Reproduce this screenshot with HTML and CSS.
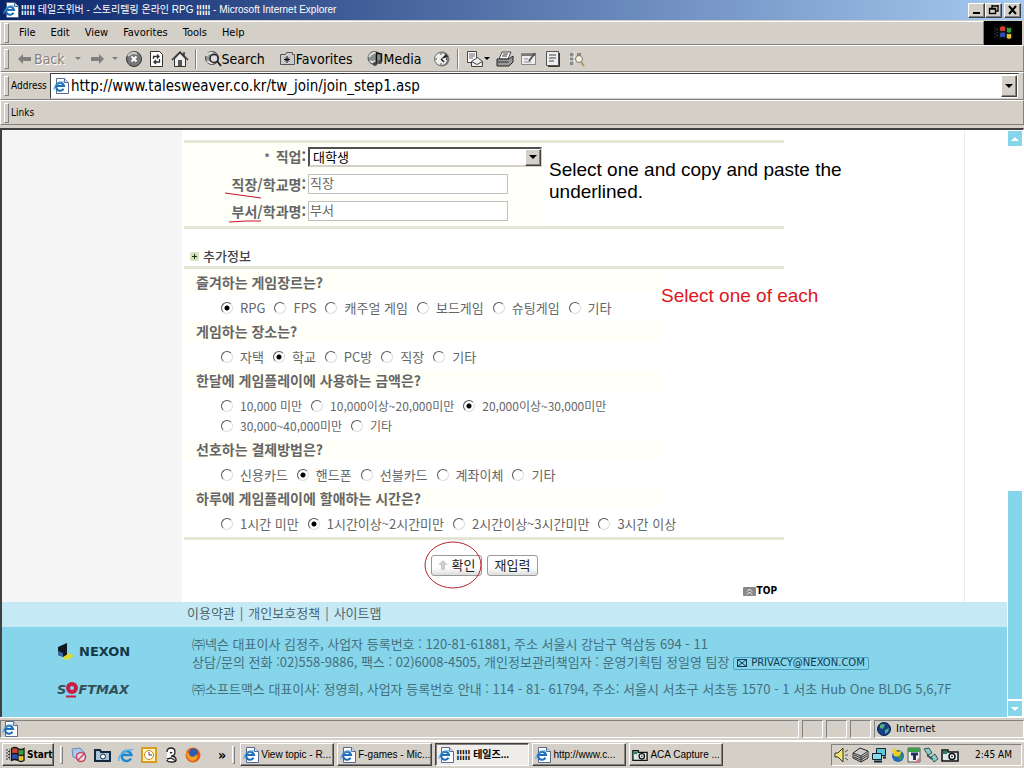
FILE: index.html
```
<!DOCTYPE html>
<html lang="ko">
<head>
  <meta charset="utf-8">
  <title>테일즈위버 - 스토리텔링 온라인 RPG</title>
  <meta name="viewport" content="width=device-width, initial-scale=1.0">
  <link rel="stylesheet" href="styles.css">
</head>
<body>
  <svg class="sprite" width="0" height="0">
    <symbol id="ie" viewBox="0 0 16 16">
      <path d="M3.5.5h8l4 4v11h-12z" fill="#fff" stroke="#5a6a8c"/>
      <path d="M11.5.5v4h4" fill="#cfdcf0" stroke="#5a6a8c"/>
      <path d="M10.5 10.8A4 4 0 1 1 11 8H3.5" fill="none" stroke="#1f6fb8" stroke-width="2.2"/>
      <path d="M1 12C0 8 6 3 12 4" fill="none" stroke="#4ba0dc"/>
    </symbol>
    <symbol id="camera" viewBox="0 0 18 16">
      <path d="M1 3h6v2h10v9H1z" fill="#dfe8e8" stroke="#111" stroke-width="1.5"/>
      <path d="M2 4h4v3H2z" fill="#2a7b6a"/>
      <circle cx="11" cy="9.5" r="3" fill="#fff" stroke="#111" stroke-width="1.5"/>
      <circle cx="11" cy="9.5" r="1" fill="#246"/>
    </symbol>
    <symbol id="flag" viewBox="0 0 20 18">
      <path d="M7 3q3-2 5.500 0v5q-3-2-5.500 0z" fill="#d8432c"/>
      <path d="M13.500 3q2.500 2 5 0v5q-2.500 2-5 0z" fill="#3c9a3c"/>
      <path d="M7 9q3-2 5.500 0v5q-3-2-5.500 0z" fill="#2b4fb8"/>
      <path d="M13.500 9q2.500 2 5 0v5q-2.500 2-5 0z" fill="#e8c52c"/>
      <path d="M6.500 2.500q3.500-2 6.500 0t6 0v12q-3 2-6 0t-6.500 0zM13 2v13M6.500 8.500q3.500-2 6.500 0t6 0" fill="none" stroke="#111" stroke-width="1.300"/>
      <path d="M1 4h4M1 7h4M1 10h4M1 13h4M3 5.500h2M3 8.500h2M3 11.500h2" stroke="#334" stroke-dasharray="2 1"/>
    </symbol>
  </svg>

  <header class="titlebar">
    <svg class="icon"><use href="#ie"/></svg>
    <h1><b>¦¦¦¦¦</b> 테일즈위버 - 스토리텔링 온라인 RPG <b>¦¦¦¦¦</b> - Microsoft Internet Explorer</h1>
    <div class="window-buttons">
      <button type="button" aria-label="Minimize"><svg width="12" height="10"><path d="M2 8h7" stroke="#000" stroke-width="2"/></svg></button>
      <button type="button" aria-label="Restore"><svg width="12" height="10"><path d="M4 1h6M4 0v3M10 0v6H8M1 4h6M1.500 3.500h6v5h-6z" fill="none" stroke="#000" stroke-width="1.300"/></svg></button>
      <button type="button" class="close" aria-label="Close"><svg width="12" height="10"><path d="M2 1l7 8M9 1L2 9" stroke="#000" stroke-width="2"/></svg></button>
    </div>
  </header>

  <div class="menu-row">
    <nav class="band menubar">
      <a href="#">File</a><a href="#">Edit</a><a href="#">View</a><a href="#">Favorites</a><a href="#">Tools</a><a href="#">Help</a>
    </nav>
    <div class="throbber">
      <svg width="20" height="18"><use href="#flag"/></svg>
    </div>
  </div>

  <div class="band toolbar">
    <button type="button" class="disabled back"><svg width="14" height="12"><path d="M0 6l5-5v3h8v4H5v3z" fill="#808080"/></svg>Back</button>
    <i class="caret dim"></i>
    <button type="button" class="forward" aria-label="Forward"><svg width="14" height="12"><path d="M14 6L9 1v3H1v4h8v3z" fill="#808080"/></svg></button>
    <i class="caret dim"></i>
    <button type="button" class="stop" aria-label="Stop"><svg width="18" height="18"><circle cx="9" cy="9" r="7.500" fill="#777" stroke="#333"/><path d="M3 6q4-5 9-2" fill="none" stroke="#ccc" stroke-width="2"/><path d="M6.500 6.500l5 5M11.500 6.500l-5 5" stroke="#fff" stroke-width="2"/></svg></button>
    <button type="button" aria-label="Refresh"><svg width="16" height="18"><path d="M1.500 1.500h9l3 3v12h-12z" fill="#fff" stroke="#333"/><path d="M4.500 9V6.500h5M8 4.500l2 2-2 2M10.500 9v3h-5M7 10l-2 2 2 2" fill="none" stroke="#333" stroke-width="1.300"/></svg></button>
    <button type="button" class="home" aria-label="Home"><svg width="18" height="18"><path d="M3.500 9v7.500h11V9L9 3z" fill="#eee" stroke="#333"/><path d="M1 10l8-8 8 8M13 2v4" fill="none" stroke="#333" stroke-width="1.500"/><path d="M7 10h4v6H7z" fill="#555"/></svg></button>
    <i class="divider"></i>
    <button type="button"><svg width="18" height="18"><circle cx="8" cy="8" r="6.500" fill="#999" stroke="#444"/><path d="M2 6q3-4 7-3M3 11q4 3 6 2" stroke="#ddd" stroke-width="2" fill="none"/><circle cx="10" cy="8.500" r="4" fill="#ddd" stroke="#222" stroke-width="1.500"/><path d="M13 11l4 5" stroke="#222" stroke-width="2"/></svg>Search</button>
    <button type="button" class="favorites"><svg width="17" height="16"><path d="M1.500 3.500h5l1-2h6v2h2v10h-14z" fill="#ccc" stroke="#555"/><path d="M8 5v7M5 8.500h6M6 6.500l4 4M10 6.500l-4 4" stroke="#111"/></svg>Favorites</button>
    <button type="button" class="media"><svg width="17" height="18"><circle cx="7.500" cy="8" r="6.500" fill="#889090" stroke="#555"/><path d="M2 7q3-5 8-4M3 11q3 2 5 0" stroke="#ddd" stroke-width="2" fill="none"/><path d="M9.500 14V3l5 1v8" fill="none" stroke="#111" stroke-width="1.500"/><circle cx="8" cy="14" r="2" fill="#444"/><circle cx="13" cy="12" r="2" fill="#444"/></svg>Media</button>
    <button type="button" class="history" aria-label="History"><svg width="18" height="18"><circle cx="9" cy="9" r="7.500" fill="#777"/><circle cx="8" cy="9" r="6.500" fill="#eee" stroke="#777"/><path d="M8 9l5-5 2 3z" fill="#222"/><path d="M8 9l3 3M8 3.500v1M8 13.500v1M2.500 9h1M13 9h1" stroke="#222" stroke-width="1.500"/></svg></button>
    <i class="divider"></i>
    <button type="button" aria-label="Mail"><svg width="18" height="18"><path d="M1.500 1.500h9v11h-9z" fill="#fff" stroke="#444"/><path d="M3 4h6M3 6h6M3 8h4" stroke="#666"/><path d="M5.500 11.500l6-4 5 4v5h-11z" fill="#eee" stroke="#444"/><path d="M5.500 11.500l5.500 3 5.500-3" fill="none" stroke="#444"/></svg><i class="caret small"></i></button>
    <button type="button" aria-label="Print"><svg width="18" height="18"><path d="M6 2h9l-3 7H3z" fill="#fff" stroke="#444"/><path d="M1 9h12l4-3v6l-4 4H1z" fill="#999" stroke="#222"/><path d="M1.500 12h11M7 4h5M6 6h5" stroke="#333"/></svg></button>
    <button type="button" aria-label="Edit"><svg width="18" height="18"><path d="M1.500 3.500h14v11h-14z" fill="#eee" stroke="#888"/><path d="M1.500 5h14" stroke="#777" stroke-width="2"/><path d="M4 9h4M4 12h7" stroke="#888"/><path d="M15 3l-6 8" stroke="#555" stroke-width="2"/></svg></button>
    <button type="button" aria-label="Discuss"><svg width="18" height="18"><path d="M2.500 1.500h12v14h-12z" fill="#eee" stroke="#555"/><path d="M15.500 3v13.500H4" stroke="#333" fill="none"/><path d="M5 5h7M5 8h7M5 11h5" stroke="#444"/></svg></button>
    <button type="button" aria-label="Research"><svg width="18" height="18"><path d="M2 3h4v12H2zM9 3h4v6H9z" fill="#888"/><path d="M1 7h14M1 11h10M6 2v13" stroke="#eee"/><circle cx="11" cy="9" r="3.500" fill="#f5f2dc" stroke="#777"/><path d="M13 12l3 4" stroke="#b0985a" stroke-width="2"/></svg></button>
  </div>

  <div class="band address">
    <label for="url">Address</label>
    <div class="address-box">
      <svg class="icon"><use href="#ie"/></svg>
      <input id="url" type="text" value="http://www.talesweaver.co.kr/tw_join/join_step1.asp">
      <button type="button" class="drop" aria-label="History list"><i class="caret"></i></button>
    </div>
  </div>

  <div class="band links">Links</div>

  <div class="viewport">
    <div class="page">
      <div class="columns">
        <div class="side"></div>
        <main>
          <form>
            <section class="job">
              <div class="field">
                <label for="job"><small>*</small> 직업:</label>
                <span class="select"><select id="job"><option>대학생</option></select><i class="select-arrow"><i class="caret"></i></i></span>
              </div>
              <div class="field">
                <label for="office">직장/학교명:
                  <svg class="mark" width="36" height="8"><path d="M0 2l36 5" stroke="#c8102e"/></svg>
                </label>
                <input id="office" type="text" value="직장">
              </div>
              <div class="field">
                <label for="dept">부서/학과명:
                  <svg class="mark flat" width="32" height="4"><path d="M0 3l18-1h14" stroke="#c8102e" fill="none"/></svg>
                </label>
                <input id="dept" type="text" value="부서">
              </div>
              <p class="note">Select one and copy and paste the underlined.</p>
            </section>

            <h2><svg width="9" height="9"><rect width="9" height="9" rx="2" fill="#cfe3bd"/><path d="M2 4.500h5M4.500 2v5" stroke="#243018"/></svg>추가정보</h2>

            <section class="survey">
              <fieldset>
                <legend>즐겨하는 게임장르는?</legend>
                <div class="options">
                  <label><input type="radio" name="genre" checked>RPG</label>
                  <label><input type="radio" name="genre">FPS</label>
                  <label><input type="radio" name="genre">캐주얼 게임</label>
                  <label><input type="radio" name="genre">보드게임</label>
                  <label><input type="radio" name="genre">슈팅게임</label>
                  <label><input type="radio" name="genre">기타</label>
                </div>
              </fieldset>
              <fieldset>
                <legend>게임하는 장소는?</legend>
                <div class="options">
                  <label><input type="radio" name="place">자택</label>
                  <label><input type="radio" name="place" checked>학교</label>
                  <label><input type="radio" name="place">PC방</label>
                  <label><input type="radio" name="place">직장</label>
                  <label><input type="radio" name="place">기타</label>
                </div>
              </fieldset>
              <fieldset>
                <legend>한달에 게임플레이에 사용하는 금액은?</legend>
                <div class="options amounts">
                  <label><input type="radio" name="cost">10,000 미만</label>
                  <label><input type="radio" name="cost">10,000이상~20,000미만</label>
                  <label><input type="radio" name="cost" checked>20,000이상~30,000미만</label>
                  <label><input type="radio" name="cost">30,000~40,000미만</label>
                  <label><input type="radio" name="cost">기타</label>
                </div>
              </fieldset>
              <fieldset>
                <legend>선호하는 결제방법은?</legend>
                <div class="options">
                  <label><input type="radio" name="pay">신용카드</label>
                  <label><input type="radio" name="pay" checked>핸드폰</label>
                  <label><input type="radio" name="pay">선불카드</label>
                  <label><input type="radio" name="pay">계좌이체</label>
                  <label><input type="radio" name="pay">기타</label>
                </div>
              </fieldset>
              <fieldset>
                <legend>하루에 게임플레이에 할애하는 시간은?</legend>
                <div class="options">
                  <label><input type="radio" name="hours">1시간 미만</label>
                  <label><input type="radio" name="hours" checked>1시간이상~2시간미만</label>
                  <label><input type="radio" name="hours">2시간이상~3시간미만</label>
                  <label><input type="radio" name="hours">3시간 이상</label>
                </div>
              </fieldset>
              <p class="note red">Select one of each</p>
            </section>

            <div class="actions">
              <button type="submit"><svg width="10" height="10"><path d="M5 0l5 5H7v5H3V5H0z" fill="#ccc"/></svg>확인
                <svg class="ring" width="58" height="48"><ellipse cx="29" cy="24" rx="28" ry="23" fill="none" stroke="#b8202c"/></svg>
              </button>
              <button type="reset">재입력</button>
            </div>
            <a class="top" href="#"><svg width="13" height="9"><rect width="13" height="9" rx="1" fill="#888"/><path d="M4 4.500L6.500 2 9 4.500M4 7.500L6.500 5 9 7.500" fill="none" stroke="#fff"/></svg>TOP</a>
          </form>
        </main>
      </div>

      <footer>
        <nav class="policies"><a href="#">이용약관</a>|<a href="#">개인보호정책</a>|<a href="#">사이트맵</a></nav>
        <div class="company">
          <div class="logos">
            <div class="nexon"><svg width="18" height="18"><path d="M1 4l9-4v12l-3 2-6-2z" fill="#101820"/><path d="M1 8l5 2v4l-5-2z" fill="#3c64a0"/><path d="M5 15l7-5 5 3-7 4z" fill="#d8dc30"/></svg>NEXON</div>
            <div class="softmax">S<svg width="12" height="16"><circle cx="6" cy="6" r="4" fill="none" stroke="#c81e46" stroke-width="4"/><path d="M0 14.500h10" stroke="#c81e46" stroke-width="2"/></svg>FTMAX</div>
          </div>
          <div class="legal">
            <p>㈜넥슨 대표이사 김정주, 사업자 등록번호 : 120-81-61881, 주소 서울시 강남구 역삼동 694 - 11</p>
            <p>상담/문의 전화 :02)558-9886, 팩스 : 02)6008-4505, 개인정보관리책임자 : 운영기획팀 정일영 팀장
              <a class="privacy" href="#"><svg width="10" height="8"><path d="M.5.5h9v7h-9zM.5.5l9 7M9.500.5l-9 7" fill="none" stroke="#0b3a55"/></svg>PRIVACY@NEXON.COM</a></p>
            <p class="gap">㈜소프트맥스 대표이사: 정영희, 사업자 등록번호 안내 : 114 - 81- 61794, 주소: 서울시 서초구 서초동 1570 - 1 서초 Hub One BLDG 5,6,7F</p>
          </div>
        </div>
      </footer>
    </div>
    <div class="scrollbar">
      <button type="button" aria-label="Scroll up"><i class="caret up"></i></button>
      <div class="track"></div>
      <div class="thumb"></div>
      <button type="button" aria-label="Scroll down"><i class="caret"></i></button>
    </div>
  </div>

  <div class="statusbar">
    <span class="grow"><svg class="icon"><use href="#ie"/></svg></span>
    <span></span><span></span><span></span>
    <span class="zone"><svg width="14" height="14"><circle cx="7" cy="7" r="6.500" fill="#173f8c" stroke="#0a1c3c"/><path d="M3 3q3-2 5 0l-2 4-3-1zM8 8l4-2-1 4-3 2z" fill="#4fb07a"/></svg>Internet</span>
  </div>

  <div class="taskbar">
    <button type="button" class="raised start"><svg width="20" height="18"><use href="#flag"/></svg>Start</button>
    <i class="grip"></i>
    <div class="quick">
      <svg width="16" height="16"><path d="M1 2l8-1 5 5-4 7-8-3z" fill="#a9c8ea" stroke="#6a84b8"/><circle cx="10" cy="10" r="4.500" fill="#e8e0e8" stroke="#c8405c" stroke-width="1.500"/><path d="M7 13l6-6" stroke="#c8405c" stroke-width="1.500"/></svg>
      <svg width="17" height="16"><path d="M1 3h5l1 2h9v9H1z" fill="#a7c4dc" stroke="#14283c" stroke-width="2"/><circle cx="9" cy="9.500" r="2.500" fill="#fff" stroke="#14283c"/></svg>
      <svg width="16" height="16"><path d="M13 11.500A5 5 0 1 1 13.500 8H4" fill="none" stroke="#2088d0" stroke-width="2.500"/><path d="M1 14C-1 9 8 1 15 3" fill="none" stroke="#58b4ee" stroke-width="1.500"/></svg>
      <svg width="16" height="16"><rect x="1" y="1" width="14" height="14" fill="#fff3c0" stroke="#d89c20" stroke-width="2"/><circle cx="8" cy="8" r="4.500" fill="#fff" stroke="#c88a10"/><path d="M8 5v3h3" fill="none" stroke="#444"/></svg>
      <svg width="14" height="16"><path d="M3 5q0-4 4-4t4 4-4 4q4 0 5 3t-4 3-5-2M6 5q1 2 2 0M3 12l4-1 5 3" fill="#fff" stroke="#222" stroke-width="1.300"/></svg>
      <svg width="16" height="16"><circle cx="8" cy="8" r="7.500" fill="#e0601c"/><circle cx="8.500" cy="6" r="4.500" fill="#2c5cb0"/><path d="M1 5q3 1 4 4 4 2 7-2 1 7-5 7-5-1-6-9z" fill="#f6a024"/></svg>
    </div>
    <b class="more">»</b>
    <i class="grip"></i>
    <div class="tasks">
      <button type="button" class="raised"><svg class="icon"><use href="#ie"/></svg>View topic - R...</button>
      <button type="button" class="raised"><svg class="icon"><use href="#ie"/></svg>F-games - Mic...</button>
      <button type="button" class="raised active"><svg class="icon"><use href="#ie"/></svg>¦¦¦¦¦ 테일즈...</button>
      <button type="button" class="raised"><svg class="icon"><use href="#ie"/></svg>http://www.c...</button>
      <button type="button" class="raised"><svg class="icon"><use href="#camera"/></svg>ACA Capture ...</button>
    </div>
    <div class="tray">
      <svg width="16" height="16"><path d="M1 6h3l5-5v14l-5-5H1z" fill="#f4e86c" stroke="#333"/><path d="M11 5l3-2M11 8h3M11 11l3 2" stroke="#555"/></svg>
      <svg width="17" height="16"><path d="M1 6l7-5 8 3v7l-7 4-8-4z" fill="#ccc" stroke="#222"/><path d="M1 6l8 3 7-5M9 9v6M2 8l7 3 6-4M2 10l7 3 6-4" fill="none" stroke="#333"/></svg>
      <svg width="16" height="16"><path d="M5.500 1.500h9v7h-9z" fill="#5cc8dc" stroke="#123"/><path d="M1.500 6.500h9v6h-9z" fill="#86dcea" stroke="#123"/><path d="M3 14.500h8M12 10.500h3" stroke="#123" stroke-width="2"/></svg>
      <svg width="16" height="16"><circle cx="9" cy="9" r="6" fill="#2468b8"/><path d="M3 3l4-2 1 4 5-1-3 6-5-1z" fill="#f0d020"/><path d="M9 9l5-1-3 6z" fill="#38a048"/></svg>
      <svg width="14" height="16"><path d="M1 1h12v14H1z" fill="#f0f0f0" stroke="#555"/><path d="M1 1h12v4H1z" fill="#38a048"/><path d="M4 7h7M7.500 7v6" stroke="#203060" stroke-width="3"/><path d="M8 15l5-5v5z" fill="#e07080"/></svg>
      <svg width="16" height="16"><path d="M1 2l5-1 3 5-4 2zM8 10l4-3 3 5-4 3z" fill="#8cc" stroke="#355"/><path d="M4 8l5 4" stroke="#355" stroke-width="2"/></svg>
      <svg width="18" height="16"><use href="#camera"/></svg>
      <time>2:45 AM</time>
    </div>
  </div>
</body>
</html>
```
FILE: styles.css
```
* {
  box-sizing: border-box;
}
body {
  display: flex;
  flex-direction: column;
  min-height: 100vh;
  margin: 0;
  background: #d4d0c8;
  color: #000;
  font: 11px/14px "DejaVu Sans Condensed", "Noto Sans CJK KR", sans-serif;
}
button, input, select {
  font: inherit;
  color: inherit;
  margin: 0;
  padding: 0;
}
button {
  display: flex;
  align-items: center;
  border: 0;
  background: none;
  white-space: nowrap;
}
a {
  color: inherit;
  text-decoration: none;
}
p, h1, h2 {
  margin: 0;
}
svg {
  flex: none;
}
.sprite {
  position: absolute;
}
.icon {
  width: 16px;
  height: 16px;
}
.caret {
  flex: none;
  border: 4px solid transparent;
  border-top-color: currentColor;
  border-bottom-width: 0;
}
.caret.dim, .caret.small {
  border-width: 3px 3px 0;
}
.caret.dim {
  color: #808080;
}
.caret.up {
  border-width: 0 4px 4px;
  border-bottom-color: currentColor;
}

/* window frame */
.titlebar {
  display: flex;
  align-items: center;
  gap: 2px;
  height: 20px;
  padding: 0 3px;
  background: linear-gradient(to right, #0a246a, #a6caf0);
  color: #fff;
}
.titlebar h1 {
  flex: 1;
  font: 10px/14px "Liberation Sans", "Noto Sans CJK KR", sans-serif;
  white-space: nowrap;
}
.window-buttons {
  display: flex;
}
.window-buttons button, .raised, .drop, .select-arrow {
  border: 1px solid;
  border-color: #fff #404040 #404040 #fff;
  box-shadow: inset -1px -1px #808080;
  background: #d4d0c8;
}
.window-buttons button {
  justify-content: center;
  width: 17px;
  height: 15px;
}
.window-buttons .close {
  margin-left: 2px;
}
.menu-row {
  display: flex;
  margin-top: 1px;
}
.band {
  display: flex;
  align-items: center;
  flex: none;
  padding-left: 10px;
  border: 1px solid;
  border-color: #fff #808080 #808080 #fff;
}
.band::before, .grip {
  content: "";
  flex: none;
  width: 3px;
  height: 18px;
  border: 1px solid;
  border-color: #fff #808080 #808080 #fff;
}
.band::before {
  margin: 0 2px 0 -7px;
}
.menubar {
  flex: 1;
  height: 24px;
  padding-left: 18px;
  gap: 15px;
}
.menubar::before {
  margin: 0 -5px 0 -15px;
}
.throbber {
  display: flex;
  justify-content: center;
  align-items: center;
  width: 40px;
  background: #000;
  border-right: 2px solid #d4d0c8;
}
.toolbar {
  height: 27px;
  font-size: 14px;
}
.toolbar::before {
  margin-right: 9px;
}
.toolbar button {
  margin-right: 6px;
}
.toolbar .disabled {
  color: #808080;
  text-shadow: 1px 1px #fff;
}
.toolbar .back {
  gap: 2px;
  margin-right: 10px;
}
.toolbar .forward {
  margin: 0 8px 0 9px;
}
.toolbar .stop {
  margin-left: 7px;
}
.divider {
  width: 2px;
  height: 20px;
  margin-right: 7px;
  border-left: 1px solid #808080;
  border-right: 1px solid #fff;
}
.toolbar .favorites, .toolbar .media {
  margin-left: 8px;
}
.toolbar .history {
  margin-left: 6px;
}
.address {
  height: 28px;
}
.address label, .links {
  font-size: 10px;
}
.address label {
  width: 39px;
  white-space: nowrap;
}
.address-box {
  display: flex;
  align-items: center;
  flex: 1;
  height: 26px;
  margin-right: 4px;
  padding: 1px 1px 1px 2px;
  border: 1px solid;
  border-color: #404040 #d4d0c8 #d4d0c8 #404040;
  background: #fff;
}
.address-box input {
  flex: 1;
  padding-left: 2px;
  border: 0;
  outline: 0;
  font-size: 15px;
}
.drop {
  justify-content: center;
  width: 16px;
  height: 22px;
}
.links {
  height: 25px;
}

/* page area */
.viewport {
  display: flex;
  flex: 1;
  margin-top: 3px;
  border: solid #404040;
  border-width: 2px 1px 0 2px;
  border-right-color: #fff;
  background: #fff;
  color: #666;
  font: 13px/20px "Noto Sans CJK KR", sans-serif;
}
.page {
  display: flex;
  flex-direction: column;
  flex: 1;
}
.columns {
  display: grid;
  grid-template-columns: 180px 1fr 43px;
}
.columns::after {
  content: "";
  border-left: 1px solid #ebebeb;
}
.side {
  background: #f5f5f5;
}
main {
  padding: 10px 2px 4px;
}
form {
  max-width: 600px;
}
.job {
  position: relative;
  border: solid #e3e5d5;
  border-width: 3px 0;
  padding-bottom: 2px;
  background: linear-gradient(to right, #fffffa 361px, #fff 361px);
}
.field {
  display: flex;
  align-items: center;
  height: 27px;
}
.field label {
  position: relative;
  width: 124px;
  padding-right: 2px;
  text-align: right;
  font-size: 14px;
  font-weight: bold;
}
.field small {
  margin-right: 2px;
  font-size: 11px;
}
.field input {
  width: 200px;
  height: 20px;
  padding: 0 1px 2px;
  border: 1px solid #c0c0c0;
  background: #fff;
}
.select {
  position: relative;
  width: 234px;
  height: 20px;
}
.select select {
  appearance: none;
  display: block;
  width: 100%;
  height: 20px;
  padding: 0 0 0 3px;
  border: 2px solid;
  border-color: #505050 #d4d0c8 #d4d0c8 #505050;
  border-radius: 0;
  background: #fff;
  color: #000;
  line-height: 16px;
}
.select-arrow {
  position: absolute;
  top: 2px;
  right: 1px;
  bottom: 1px;
  display: flex;
  align-items: center;
  justify-content: center;
  width: 16px;
  color: #000;
  pointer-events: none;
}
.mark {
  position: absolute;
  left: 41px;
  bottom: -5px;
}
.mark.flat {
  left: 45px;
  bottom: -2px;
}
.note {
  position: absolute;
  left: 365px;
  top: 16px;
  width: 300px;
  color: #000;
  font: 19px/22px "Liberation Sans", sans-serif;
}
.note.red {
  left: 477px;
  color: #e01520;
}
h2 {
  display: flex;
  align-items: center;
  gap: 4px;
  margin-top: 17px;
  padding-left: 6px;
  color: #444;
  font-size: 13px;
  font-weight: 500;
}
.survey {
  position: relative;
  padding-top: 3px;
  border: solid #e3e5d5;
  border-width: 3px 0;
}
fieldset {
  margin: 0;
  padding: 0;
  border: 0;
}
legend {
  width: 476px;
  height: 21px;
  padding: 0 0 0 12px;
  background: #fffff8;
  font-size: 14px;
  font-weight: bold;
}
.options {
  display: flex;
  flex-wrap: wrap;
  column-gap: 9px;
  padding: 5px 60px 3px 37px;
}
.options.amounts {
  padding-right: 120px;
  font-size: 12px;
}
.options label {
  display: flex;
  align-items: center;
  gap: 7px;
  white-space: nowrap;
}
input[type="radio"] {
  appearance: none;
  width: 12px;
  height: 12px;
  border: 1px solid;
  border-color: #555 #ddd #ddd #555;
  border-radius: 50%;
  background: #fff;
}
input[type="radio"]:checked {
  background: radial-gradient(circle, #000 2px, #fff 3px);
}
.actions {
  display: flex;
  gap: 5px;
  margin: 15px 0 0 247px;
}
.actions button {
  position: relative;
  justify-content: center;
  gap: 4px;
  width: 51px;
  height: 21px;
  padding-bottom: 2px;
  border: 1px solid #999;
  border-radius: 3px;
  background: linear-gradient(#fff 60%, #ddd);
  color: #222;
}
.ring {
  position: absolute;
  left: -8px;
  top: -15px;
}
.top {
  display: flex;
  align-items: center;
  justify-content: flex-end;
  gap: 1px;
  height: 14px;
  margin: 8px 7px 0 0;
  color: #000;
  font: bold 10px/14px "DejaVu Sans Condensed", sans-serif;
}
footer {
  display: flex;
  flex-direction: column;
  flex: 1;
  background: #87d5ea;
  color: #456f7d;
}
.policies {
  display: flex;
  gap: 5px;
  height: 25px;
  padding: 1px 0 0 185px;
  background: #c6eaf5;
  color: #4c6670;
}
.company {
  display: grid;
  grid-template-columns: 190px 1fr;
  padding-top: 8px;
}
.logos {
  padding: 8px 0 0 55px;
  font: bold 13px/18px "DejaVu Sans", sans-serif;
}
.nexon, .softmax {
  display: flex;
  align-items: center;
  color: #14384a;
}
.nexon {
  gap: 4px;
}
.softmax {
  margin-top: 20px;
  color: #33505a;
  font-style: italic;
}
.legal p {
  line-height: 18px;
  white-space: nowrap;
}
.legal .gap {
  margin-top: 9px;
}
.privacy {
  display: inline-flex;
  align-items: center;
  gap: 4px;
  height: 13px;
  padding: 0 3px;
  border: 1px solid #4aa0bc;
  border-radius: 2px;
  color: #0b3a55;
  font: 10px/10px "DejaVu Sans", sans-serif;
}
.scrollbar {
  display: flex;
  flex-direction: column;
  width: 16px;
  padding: 1px;
  color: #fff;
}
.scrollbar button {
  justify-content: center;
  height: 15px;
  background: #87d5ea;
}
.track {
  flex: 345;
}
.thumb {
  flex: 208;
  margin-bottom: 2px;
  background: #87d5ea;
}

/* status bar and taskbar */
.statusbar {
  display: flex;
  gap: 3px;
  height: 24px;
  padding: 2px 0;
  border: solid #fff;
  border-width: 1px 0;
}
.statusbar span {
  display: flex;
  align-items: center;
  width: 21px;
  border: 1px solid;
  border-color: #808080 #fff #fff #808080;
}
.statusbar .grow {
  flex: 1;
  padding-left: 1px;
}
.statusbar .zone {
  width: 150px;
  gap: 5px;
  padding-left: 2px;
}
.taskbar {
  display: flex;
  align-items: center;
  height: 27px;
  padding: 0 2px 1px;
  border-top: 1px solid #fff;
  font-size: 10px;
}
.raised {
  height: 23px;
}
.start {
  gap: 2px;
  width: 52px;
  padding: 0 2px;
  font-weight: bold;
}
.grip {
  margin-left: 6px;
}
.quick {
  display: flex;
  gap: 7px;
  margin-left: 8px;
}
.more {
  margin-left: 17px;
  font-size: 14px;
}
.tasks {
  display: flex;
  flex: 1;
  gap: 3px;
  margin: 0 8px 0 5px;
  font-family: "Liberation Sans", "Noto Sans CJK KR", sans-serif;
}
.tasks button {
  flex: 0 1 94px;
  gap: 2px;
  padding: 0 1px 0 2px;
}
.tasks .active {
  border-color: #404040 #fff #fff #404040;
  box-shadow: inset 1px 1px #808080;
  background: #efedea;
  font-weight: bold;
}
.tray {
  display: flex;
  align-items: center;
  gap: 2px;
  height: 22px;
  padding: 0 9px 0 2px;
  border: 1px solid;
  border-color: #808080 #fff #fff #808080;
}
.tray time {
  margin-left: 14px;
}
```
